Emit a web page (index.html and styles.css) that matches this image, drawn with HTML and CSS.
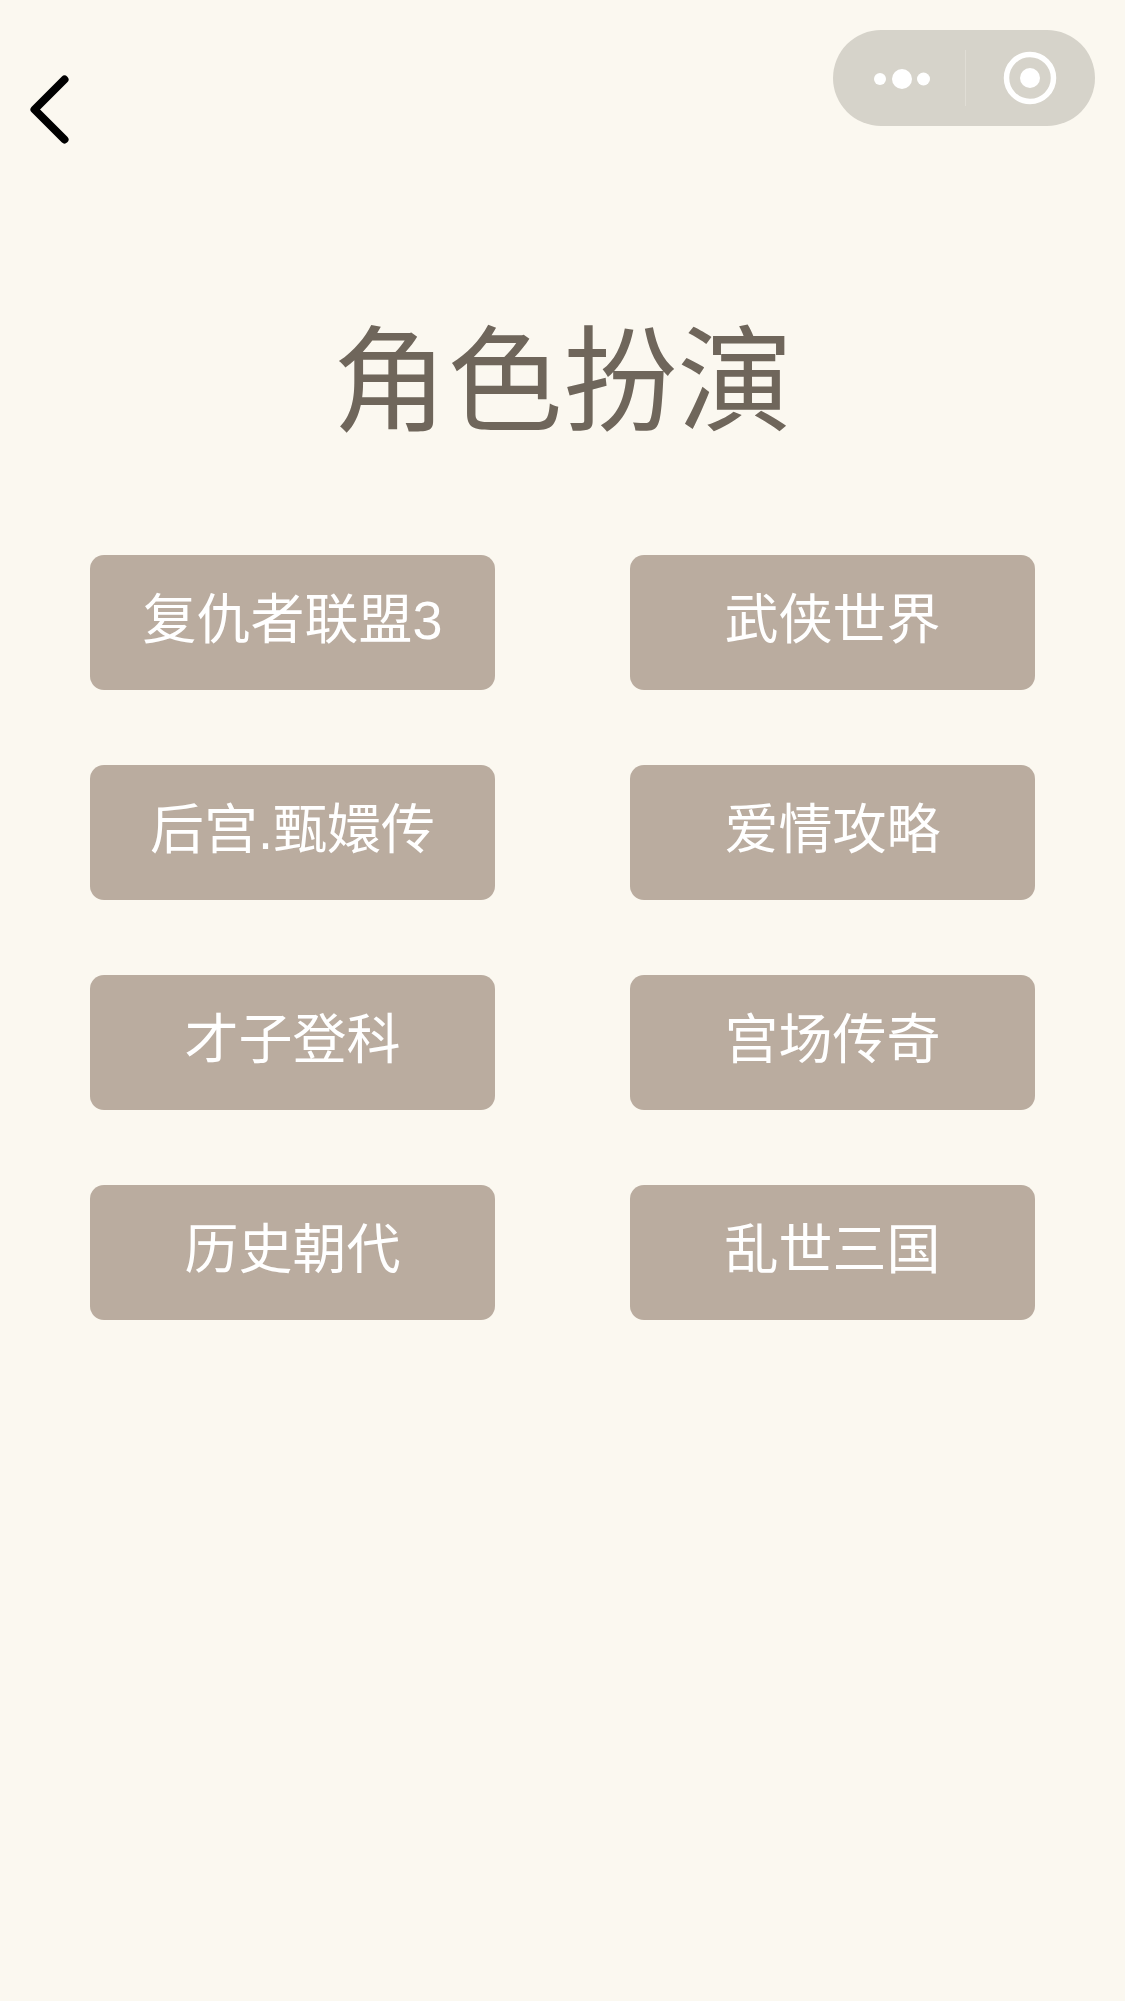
FILE: index.html
```html
<!DOCTYPE html>
<html lang="zh">
  <head>
    <meta charset="utf-8">
    <title>角色扮演</title>
    <link rel="stylesheet" href="styles.css">
  </head>

  <body>

    <div class="topbar">
      <svg class="back" width="39" height="69" viewBox="0 0 39 69">
        <path d="M34.5 4.5 L4.5 34.5 L34.5 64.5" fill="none" stroke="#000" stroke-width="8" stroke-linecap="round" stroke-linejoin="round"/>
      </svg>
      <div class="capsule">
        <svg class="capsule-more" width="60" height="22" viewBox="0 0 60 22">
          <circle cx="6" cy="11" r="6" fill="#fff"/>
          <circle cx="28" cy="11" r="10" fill="#fff"/>
          <circle cx="49.5" cy="11" r="6.5" fill="#fff"/>
        </svg>
        <div class="capsule-line"></div>
        <svg class="capsule-close" width="54" height="54" viewBox="0 0 54 54">
          <circle cx="27" cy="27" r="23.5" fill="none" stroke="#fff" stroke-width="5.5"/>
          <circle cx="27" cy="27" r="10" fill="#fff"/>
        </svg>
      </div>
    </div>

    <h1 class="title">角色扮演</h1>

    <div class="grid">
      <div class="item">复仇者联盟3</div>
      <div class="item">武侠世界</div>
      <div class="item">后宫.甄嬛传</div>
      <div class="item">爱情攻略</div>
      <div class="item">才子登科</div>
      <div class="item">宫场传奇</div>
      <div class="item">历史朝代</div>
      <div class="item">乱世三国</div>
    </div>

  </body>
</html>
```

FILE: styles.css
```css
html, body {
  margin: 0;
  padding: 0;
}

body {
  height: 2001px;
  overflow: hidden;
  background-color: #fbf8f0;
  font-family: "Liberation Sans", "Noto Sans CJK SC", sans-serif;
}

.topbar {
  display: flex;
  justify-content: space-between;
  align-items: flex-start;
  height: 144px;
  padding: 30px 30px 0 30px;
  box-sizing: border-box;
}

.back {
  margin-top: 45px;
}

.capsule {
  display: flex;
  align-items: center;
  width: 262px;
  height: 96px;
  border-radius: 48px;
  background-color: #d6d3ca;
}

.capsule-more {
  margin-left: 41px;
  margin-top: 2px;
}

.capsule-line {
  width: 1px;
  height: 56px;
  margin-left: 31px;
  background-color: #e0ddd5;
}

.capsule-close {
  margin-left: 37px;
}

.title {
  margin: 158px 0 0;
  text-align: center;
  font-size: 115px;
  line-height: 160px;
  font-weight: 400;
  color: #6f665b;
}

.grid {
  display: grid;
  grid-template-columns: 405px 405px;
  column-gap: 135px;
  row-gap: 75px;
  margin-top: 93px;
  padding-left: 90px;
}

.item {
  height: 135px;
  border-radius: 14px;
  background-color: #baac9f;
  color: #fff;
  font-size: 54px;
  line-height: 130px;
  text-align: center;
}
```
